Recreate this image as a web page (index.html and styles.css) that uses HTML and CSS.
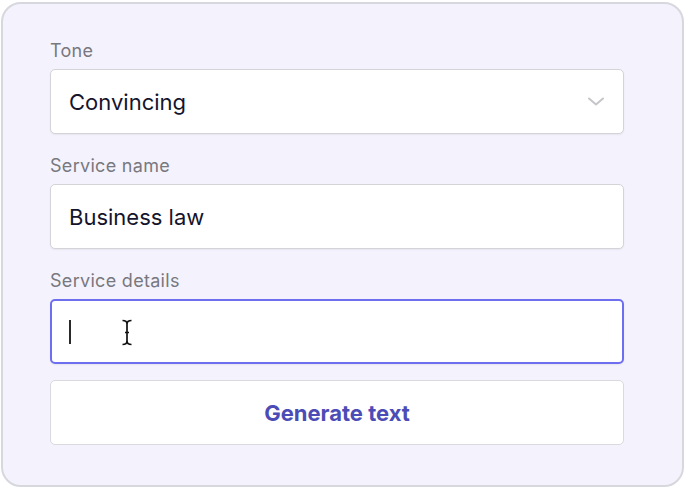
FILE: index.html
```html
<!DOCTYPE html>
<html lang="en">
<head>
<meta charset="utf-8">
<title>Service text generator</title>
<link rel="stylesheet" href="styles.css">
</head>
<body>
<div class="card">
  <div class="group">
    <div class="label">Tone</div>
    <div class="field select">
      <span class="value">Convincing</span>
      <svg class="chevron" width="18" height="9" viewBox="0 0 18 9"><path d="M2 1.5 L9 7.5 L16 1.5" fill="none" stroke="#c6c6ca" stroke-width="2" stroke-linecap="round" stroke-linejoin="round"/></svg>
    </div>
  </div>
  <div class="group">
    <div class="label">Service name</div>
    <div class="field"><span class="value">Business law</span></div>
  </div>
  <div class="group">
    <div class="label">Service details</div>
    <div class="field focused">
      <span class="caret"></span>
      <svg class="ibeam" width="14" height="27" viewBox="0 0 14 27"><path d="M2.5 1.5 Q7 1.5 7 5 Q7 1.5 11.5 1.5 M7 5 V22 M2.5 25.5 Q7 25.5 7 22 Q7 25.5 11.5 25.5 M5 13.5 H9" fill="none" stroke="#111" stroke-width="1.7"/></svg>
    </div>
  </div>
  <div class="button">Generate text</div>
</div>
</body>
</html>
```
FILE: styles.css
```css
html, body {
  margin: 0;
  padding: 0;
  background: #ffffff;
}
body {
  font-family: Inter, "Noto Sans", sans-serif;
}
.card {
  box-sizing: border-box;
  width: 683px;
  height: 485px;
  margin: 2px 0 0 1px;
  border: 2px solid #d7d7de;
  border-radius: 20px;
  background: #f4f3fd;
  padding: 37px 58px 0 47px;
  display: flex;
  flex-direction: column;
}
.group {
  display: flex;
  flex-direction: column;
  margin-bottom: 22px;
}
.group:nth-of-type(3) {
  margin-bottom: 16px;
}
.label {
  font-size: 18px;
  letter-spacing: 0.3px;
  line-height: 20px;
  color: #78787e;
  margin-bottom: 8px;
}
.field {
  box-sizing: border-box;
  height: 65px;
  background: #ffffff;
  border: 1px solid #d3d3d8;
  border-radius: 5px;
  box-shadow: 0 1px 2px rgba(0, 0, 0, 0.06);
  display: flex;
  align-items: center;
  padding: 0 18px;
}
.value {
  font-size: 22px;
  color: #15142c;
}
.select {
  justify-content: space-between;
}
.focused {
  border: 2px solid #6e6ef0;
  padding-left: 17px;
}
.caret {
  display: block;
  width: 2px;
  height: 24px;
  background: #2a2a2a;
}
.ibeam {
  margin-left: 49px;
  margin-top: 2px;
}
.button {
  box-sizing: border-box;
  height: 65px;
  background: #ffffff;
  border: 1px solid #d9d9de;
  border-radius: 5px;
  display: flex;
  align-items: center;
  justify-content: center;
  font-size: 22px;
  font-weight: 700;
  color: #4c4cb6;
}
```
